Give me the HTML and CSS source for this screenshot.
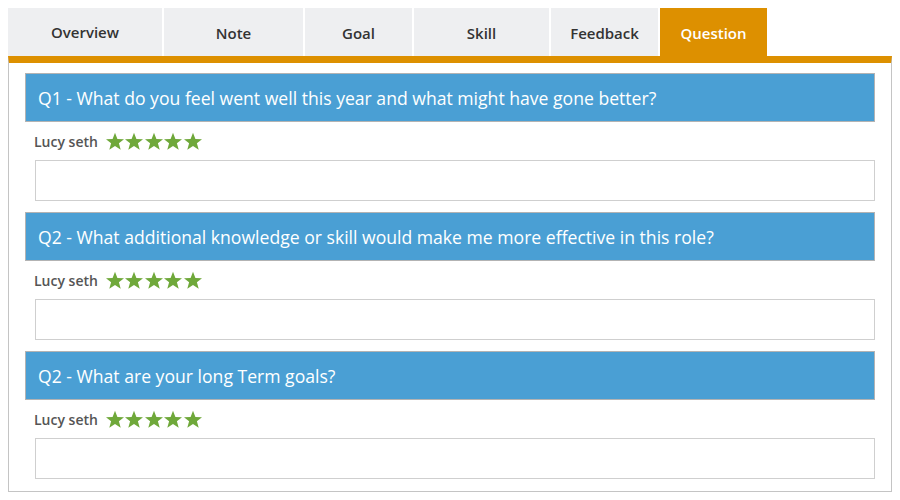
FILE: index.html
```html
<!DOCTYPE html>
<html>
<head>
<meta charset="utf-8">
<link rel="stylesheet" href="styles.css">
</head>
<body>
<div class="tabs">
  <div class="tab t-overview">Overview</div>
  <div class="tab t-note">Note</div>
  <div class="tab t-goal">Goal</div>
  <div class="tab t-skill">Skill</div>
  <div class="tab t-feedback">Feedback</div>
  <div class="tab t-question active">Question</div>
</div>
<div class="panel">
  <div class="q">
    <div class="q-head">Q1 - What do you feel went well this year and what might have gone better?</div>
    <div class="q-name"><span class="name">Lucy seth</span>
      <span class="stars">
        <svg viewBox="0 0 20 19"><path d="M10 0.8l2.4 6.1 6.6 0.3-5.1 4.1 1.8 6.4L10 14l-5.7 3.7 1.8-6.4-5.1-4.1 6.6-0.3z"/></svg>
        <svg viewBox="0 0 20 19"><path d="M10 0.8l2.4 6.1 6.6 0.3-5.1 4.1 1.8 6.4L10 14l-5.7 3.7 1.8-6.4-5.1-4.1 6.6-0.3z"/></svg>
        <svg viewBox="0 0 20 19"><path d="M10 0.8l2.4 6.1 6.6 0.3-5.1 4.1 1.8 6.4L10 14l-5.7 3.7 1.8-6.4-5.1-4.1 6.6-0.3z"/></svg>
        <svg viewBox="0 0 20 19"><path d="M10 0.8l2.4 6.1 6.6 0.3-5.1 4.1 1.8 6.4L10 14l-5.7 3.7 1.8-6.4-5.1-4.1 6.6-0.3z"/></svg>
        <svg viewBox="0 0 20 19"><path d="M10 0.8l2.4 6.1 6.6 0.3-5.1 4.1 1.8 6.4L10 14l-5.7 3.7 1.8-6.4-5.1-4.1 6.6-0.3z"/></svg>
      </span>
    </div>
    <div class="q-box"></div>
  </div>
  <div class="q">
    <div class="q-head">Q2 - What additional knowledge or skill would make me more effective in this role?</div>
    <div class="q-name"><span class="name">Lucy seth</span>
      <span class="stars">
        <svg viewBox="0 0 20 19"><path d="M10 0.8l2.4 6.1 6.6 0.3-5.1 4.1 1.8 6.4L10 14l-5.7 3.7 1.8-6.4-5.1-4.1 6.6-0.3z"/></svg>
        <svg viewBox="0 0 20 19"><path d="M10 0.8l2.4 6.1 6.6 0.3-5.1 4.1 1.8 6.4L10 14l-5.7 3.7 1.8-6.4-5.1-4.1 6.6-0.3z"/></svg>
        <svg viewBox="0 0 20 19"><path d="M10 0.8l2.4 6.1 6.6 0.3-5.1 4.1 1.8 6.4L10 14l-5.7 3.7 1.8-6.4-5.1-4.1 6.6-0.3z"/></svg>
        <svg viewBox="0 0 20 19"><path d="M10 0.8l2.4 6.1 6.6 0.3-5.1 4.1 1.8 6.4L10 14l-5.7 3.7 1.8-6.4-5.1-4.1 6.6-0.3z"/></svg>
        <svg viewBox="0 0 20 19"><path d="M10 0.8l2.4 6.1 6.6 0.3-5.1 4.1 1.8 6.4L10 14l-5.7 3.7 1.8-6.4-5.1-4.1 6.6-0.3z"/></svg>
      </span>
    </div>
    <div class="q-box"></div>
  </div>
  <div class="q">
    <div class="q-head">Q2 - What are your long Term goals?</div>
    <div class="q-name"><span class="name">Lucy seth</span>
      <span class="stars">
        <svg viewBox="0 0 20 19"><path d="M10 0.8l2.4 6.1 6.6 0.3-5.1 4.1 1.8 6.4L10 14l-5.7 3.7 1.8-6.4-5.1-4.1 6.6-0.3z"/></svg>
        <svg viewBox="0 0 20 19"><path d="M10 0.8l2.4 6.1 6.6 0.3-5.1 4.1 1.8 6.4L10 14l-5.7 3.7 1.8-6.4-5.1-4.1 6.6-0.3z"/></svg>
        <svg viewBox="0 0 20 19"><path d="M10 0.8l2.4 6.1 6.6 0.3-5.1 4.1 1.8 6.4L10 14l-5.7 3.7 1.8-6.4-5.1-4.1 6.6-0.3z"/></svg>
        <svg viewBox="0 0 20 19"><path d="M10 0.8l2.4 6.1 6.6 0.3-5.1 4.1 1.8 6.4L10 14l-5.7 3.7 1.8-6.4-5.1-4.1 6.6-0.3z"/></svg>
        <svg viewBox="0 0 20 19"><path d="M10 0.8l2.4 6.1 6.6 0.3-5.1 4.1 1.8 6.4L10 14l-5.7 3.7 1.8-6.4-5.1-4.1 6.6-0.3z"/></svg>
      </span>
    </div>
    <div class="q-box"></div>
  </div>
</div>
</body>
</html>
```
FILE: styles.css
```css
body {
  margin: 8px;
  background: #fff;
  font-family: "Open Sans", "Noto Sans", sans-serif;
}
.tabs {
  display: flex;
  gap: 2px;
  height: 48px;
}
.tab {
  background: #eeeff1;
  color: #333;
  font-size: 15px;
  font-weight: 600;
  display: flex;
  align-items: center;
  justify-content: center;
  box-sizing: border-box;
  padding-top: 2px;
}
.t-overview { width: 154px; padding-top: 0; }
.t-note { width: 139px; }
.t-goal { width: 107px; }
.t-skill { width: 135px; }
.t-feedback { width: 107px; }
.t-question { width: 107px; }
.tab.active {
  background: #dd9000;
  color: #fff;
}
.panel {
  width: 884px;
  box-sizing: border-box;
  border: 1px solid #c4c4c4;
  border-top: 7px solid #dd9000;
  padding: 10px 16px 12px 16px;
}
.q + .q {
  margin-top: 11px;
}
.q-head {
  height: 49px;
  box-sizing: border-box;
  background: #4a9fd4;
  border: 1px solid #b3b3b3;
  color: #fff;
  font-size: 17.6px;
  padding-left: 12px;
  padding-top: 1px;
  display: flex;
  align-items: center;
}
.q-name {
  height: 38px;
  display: flex;
  align-items: center;
  padding-left: 9px;
  padding-top: 1px;
  box-sizing: border-box;
}
.name {
  font-size: 14px;
  font-weight: 600;
  color: #555;
}
.stars {
  display: flex;
  margin-left: 7px;
}
.stars svg {
  width: 20px;
  height: 19px;
  margin-right: -0.5px;
  fill: #6fa83a;
}
.q-box {
  margin-left: 10px;
  height: 41px;
  box-sizing: border-box;
  border: 1px solid #cfcfcf;
}
```
